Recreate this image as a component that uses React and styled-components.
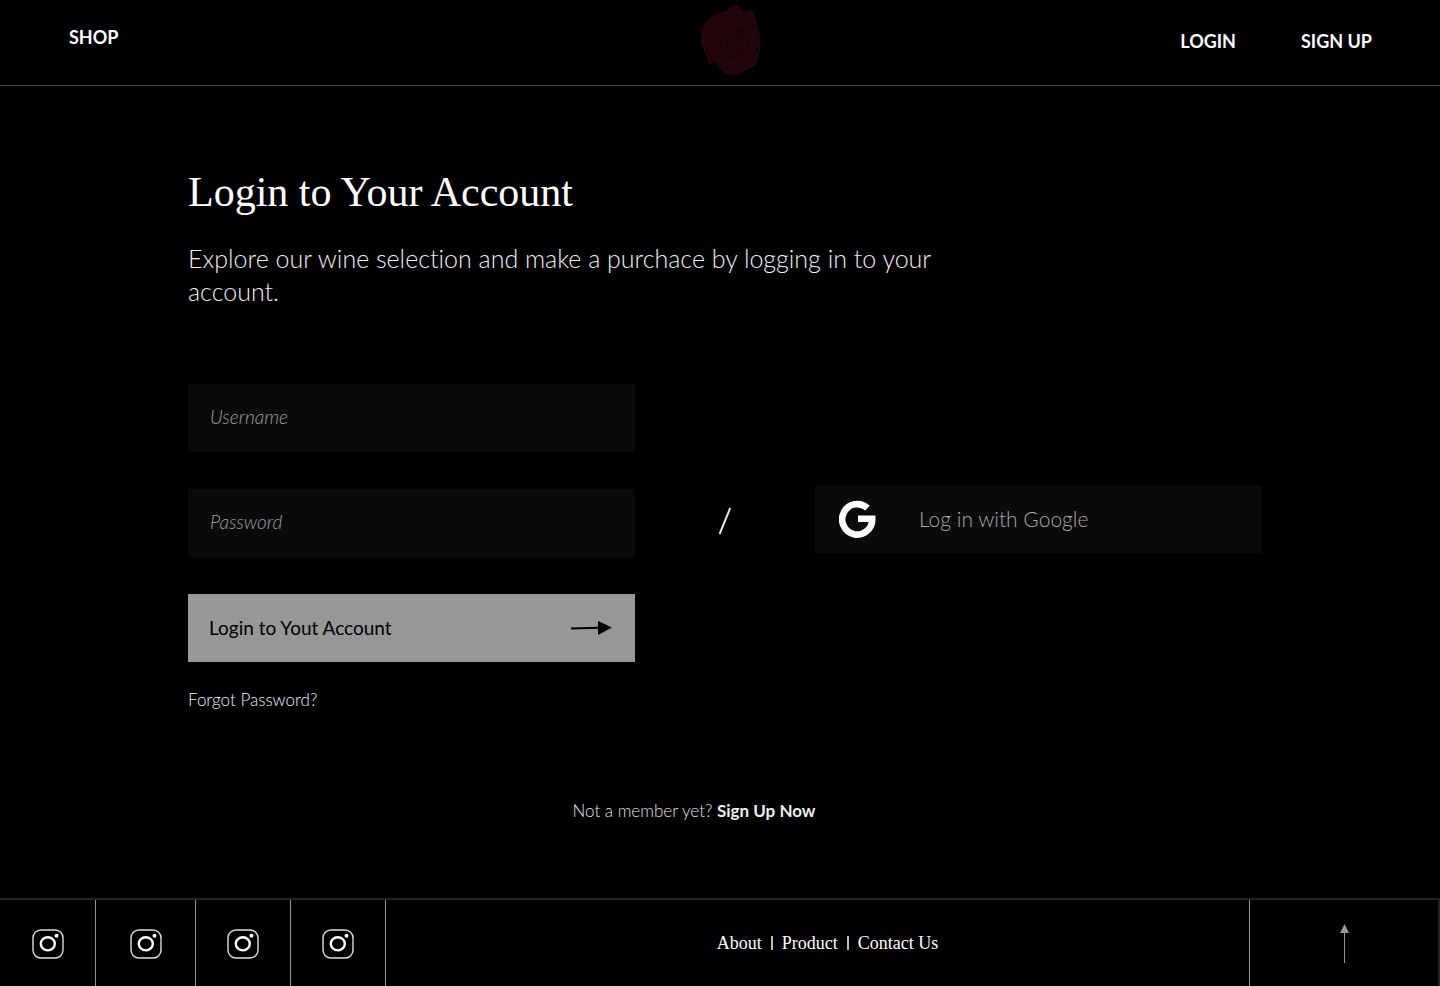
import React from 'react';
import styled, { createGlobalStyle } from 'styled-components';

const GlobalStyle = createGlobalStyle`
  * { box-sizing: border-box; }
  body {
    margin: 0;
    background: #000;
    color: #fff;
    font-family: Lato, "Open Sans", sans-serif;
    font-variant-ligatures: none;
  }
`;

const serif = '"Liberation Serif", "Times New Roman", serif';

const Page = styled.div`
  min-height: 100vh;
  display: flex;
  flex-direction: column;
`;

const Header = styled.header`
  display: grid;
  grid-template-columns: 1fr auto 1fr;
  align-items: center;
  height: 86px;
  padding: 0 48px 0 69px;
  border-bottom: 1px solid #484848;
`;

const NavGroup = styled.nav`
  display: flex;
  gap: 65px;
  justify-content: ${({ $end }) => ($end ? 'flex-end' : 'flex-start')};
  padding: ${({ $end }) => ($end ? '0 20px 4px 0' : '0 0 12px')};
`;

const NavLink = styled.a`
  color: #fff;
  font-size: 18px;
  line-height: 24px;
  font-weight: 700;
  text-decoration: none;
`;

const Home = styled.a`
  display: block;
  padding-bottom: 4px;
  svg { display: block; }
`;

const Main = styled.main`
  flex: 1;
  padding: 80px 178px 72px 188px;
`;

const Title = styled.h1`
  margin: 0;
  font-family: ${serif};
  font-size: 42px;
  line-height: 52px;
  font-weight: 400;
`;

const Intro = styled.p`
  margin: 24px 0 0;
  max-width: 780px;
  font-size: 25px;
  line-height: 33px;
  font-weight: 300;
  color: #eee;
`;

const Options = styled.div`
  display: grid;
  grid-template-columns: 1fr 180px 1fr;
  margin-top: 76px;
`;

const Form = styled.form`
  display: flex;
  flex-direction: column;
  gap: 37px;
`;

const Label = styled.label`
  display: block;
`;

const Input = styled.input`
  display: block;
  width: 100%;
  height: 68px;
  padding: 0 22px 3px;
  border: 0;
  border-radius: 0;
  background: #0a0a0a;
  color: #fff;
  font: italic 300 19px/24px Lato, sans-serif;
  &::placeholder { color: #a0a0a0; opacity: 1; }
`;

const Button = styled.button`
  display: flex;
  align-items: center;
  width: 100%;
  height: 68px;
  border: 0;
  font-family: inherit;
  text-align: left;
  cursor: pointer;
`;

const SubmitButton = styled(Button)`
  justify-content: space-between;
  padding: 0 23px 1px 21px;
  background: #979797;
  color: #000;
  font-size: 19px;
`;

const GoogleButton = styled(Button)`
  gap: 43px;
  padding: 0 24px 1px;
  background: #0a0a0a;
  color: #a8a8a8;
  font-size: 21px;
  font-weight: 300;
`;

const Side = styled.div`
  display: flex;
  justify-content: center;
  align-items: flex-start;
  padding-top: ${({ $top }) => $top}px;
`;

const TextLink = styled.a`
  color: #eee;
  font-size: 17px;
  line-height: 24px;
  font-weight: ${({ $strong }) => ($strong ? 700 : 300)};
  text-decoration: none;
`;

const Forgot = styled.p`
  margin: 26px 0 0;
  line-height: 24px;
`;

const Member = styled.p`
  margin: 87px 0 0;
  padding-right: 62px;
  text-align: center;
  font-size: 17px;
  line-height: 24px;
  font-weight: 300;
  color: #e0e0e0;
`;

const Footer = styled.footer`
  display: grid;
  grid-template-columns: auto 1fr 189px;
  height: 88px;
  border-top: 2px solid #222;
  border-right: 2px solid #222;
`;

const Socials = styled.div`
  display: flex;
`;

const SocialLink = styled.a`
  display: flex;
  align-items: center;
  justify-content: center;
  width: ${({ $width }) => $width}px;
  padding-top: 2px;
  border-right: 1px solid #979797;
`;

const FooterNav = styled.nav`
  display: flex;
  align-items: center;
  justify-content: center;
  gap: 9px;
  padding-left: 20px;
`;

const FooterLink = styled.a`
  color: #fff;
  font-family: ${serif};
  font-size: 18px;
  line-height: 24px;
  text-decoration: none;
`;

const Bar = styled.span`
  width: 2px;
  height: 14px;
  background: #bbb;
`;

const ToTop = styled.a`
  display: flex;
  align-items: center;
  justify-content: center;
  border-left: 1px solid #979797;
`;

function Seal() {
  return (
    <svg width="62" height="74" viewBox="0 0 62 74" aria-hidden="true">
      <path
        d="M26 7 C29 5 31 2 34 1 C38 0 40 5 43 7 C47 8 49 4 52 6 C56 12 57 18 58 25 C61 31 61 38 60 46 C58 51 59 56 55 61 C51 65 47 65 43 68 C39 71 34 73 30 71 C25 70 21 66 18 62 L13 58 L10 61 C7 60 8 54 6 51 C3 44 1 40 1 34 C1 27 2 22 6 18 C10 12 18 9 26 7 Z"
        fill="#220509"
      />
      <g fill="none" stroke="#170305">
        <ellipse cx="32" cy="38" rx="26" ry="27" />
        <ellipse cx="30" cy="37" rx="22" ry="23" stroke="#2a080c" />
        <path d="M14 31 Q20 19 30 23 T47 27 M12 40 Q18 32 25 38 T37 34 T49 41 M18 50 Q24 42 30 49 T44 49 M22 29 Q30 30 27 40 T36 53 M39 23 Q32 32 40 38 T36 48 M18 36 Q23 42 18 46 M25 57 Q32 52 40 57" />
      </g>
    </svg>
  );
}

function GoogleMark() {
  return (
    <svg width="37" height="38" viewBox="0 0 37 38" aria-hidden="true">
      <path d="M28.4 8.2 A15 15.2 0 1 0 33.2 18.8 H19" fill="none" stroke="#fff" strokeWidth="6.6" />
    </svg>
  );
}

function Instagram() {
  return (
    <svg width="32" height="30" viewBox="0 0 32 30" fill="none" aria-hidden="true">
      <rect x="1" y="1" width="30" height="28" rx="8" stroke="#ddd" strokeWidth="1.4" />
      <ellipse cx="15.8" cy="14.8" rx="7" ry="6.6" stroke="#fff" strokeWidth="2.4" />
      <circle cx="24.5" cy="6.8" r="2" fill="#fff" />
    </svg>
  );
}

const networks = [
  { name: 'Instagram', width: 96 },
  { name: 'Instagram photos', width: 100 },
  { name: 'Instagram stories', width: 95 },
  { name: 'Instagram reels', width: 95 },
];

export default function App() {
  return (
    <Page>
      <GlobalStyle />
      <Header>
        <NavGroup>
          <NavLink href="#shop">SHOP</NavLink>
        </NavGroup>
        <Home href="#home" aria-label="Home"><Seal /></Home>
        <NavGroup $end>
          <NavLink href="#login">LOGIN</NavLink>
          <NavLink href="#signup">SIGN UP</NavLink>
        </NavGroup>
      </Header>
      <Main>
        <Title>Login to Your Account</Title>
        <Intro>Explore our wine selection and make a purchace by logging in to your account.</Intro>
        <Options>
          <Form onSubmit={(event) => event.preventDefault()}>
            <Label><Input type="text" placeholder="Username" aria-label="Username" /></Label>
            <Label><Input type="password" placeholder="Password" aria-label="Password" /></Label>
            <SubmitButton type="submit">
              Login to Yout Account
              <svg width="41" height="14" viewBox="0 0 41 14" aria-hidden="true">
                <path d="M0 7.4 L28 6.8" stroke="#000" strokeWidth="2" />
                <path d="M27 0 L41 6.6 L27 14 Z" />
              </svg>
            </SubmitButton>
          </Form>
          <Side $top={123}>
            <svg width="14" height="28" viewBox="0 0 14 28" aria-hidden="true">
              <path d="M1.6 27 L12.2 1" stroke="#e6e6e6" strokeWidth="2" />
            </svg>
          </Side>
          <Side $top={101}>
            <GoogleButton type="button"><GoogleMark />Log in with Google</GoogleButton>
          </Side>
        </Options>
        <Forgot><TextLink href="#forgot">Forgot Password?</TextLink></Forgot>
        <Member>Not a member yet? <TextLink href="#signup" $strong>Sign Up Now</TextLink></Member>
      </Main>
      <Footer>
        <Socials>
          {networks.map(({ name, width }) => (
            <SocialLink key={name} href="#instagram" aria-label={name} $width={width}><Instagram /></SocialLink>
          ))}
        </Socials>
        <FooterNav>
          <FooterLink href="#about">About</FooterLink>
          <Bar />
          <FooterLink href="#product">Product</FooterLink>
          <Bar />
          <FooterLink href="#contact">Contact Us</FooterLink>
        </FooterNav>
        <ToTop href="#top" aria-label="Back to top">
          <svg width="9" height="39" viewBox="0 0 9 39" fill="#979797" aria-hidden="true">
            <path d="M4.5 0 L9 9 H0 Z" />
            <rect x="4" y="9" width="1" height="30" />
          </svg>
        </ToTop>
      </Footer>
    </Page>
  );
}
